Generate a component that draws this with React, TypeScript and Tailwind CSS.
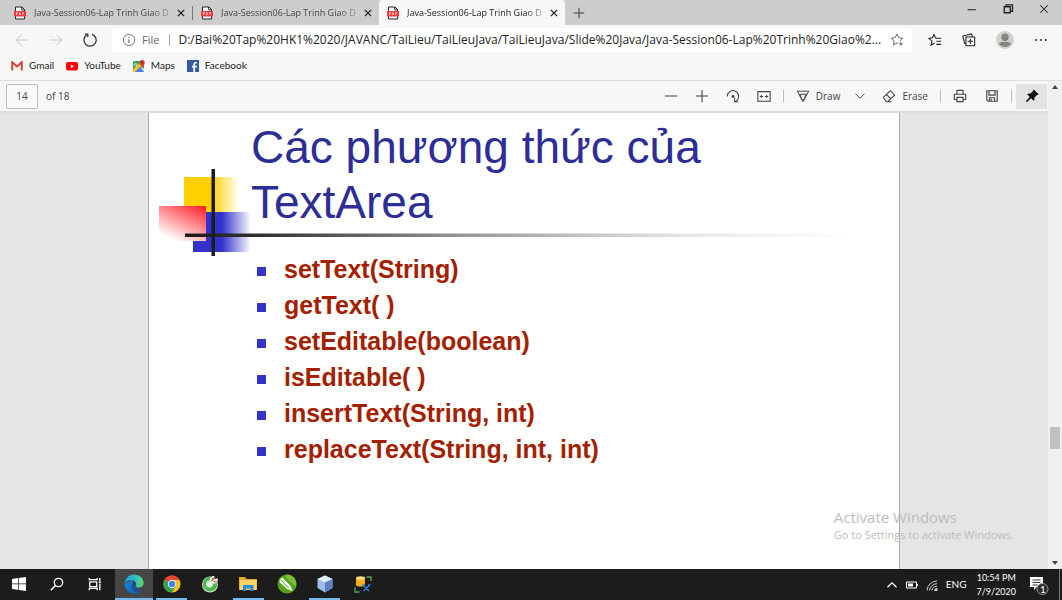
import type { ReactNode } from "react";

function Svg({ children, className = "size-4" }: { children: ReactNode; className?: string }) {
  return (
    <svg viewBox="0 0 16 16" fill="none" stroke="currentColor" strokeWidth="1" className={`shrink-0 ${className}`} aria-hidden="true">
      {children}
    </svg>
  );
}

function PdfIcon() {
  return (
    <svg viewBox="0 0 12 14" className="h-3.5 w-3 shrink-0" aria-hidden="true">
      <path d="M1.500 1h6.500l2.600 2.600V13H1.500Z" fill="#fff" stroke="#222" />
      <path d="M7.800 1v3h3" fill="none" stroke="#222" />
      <rect x="0" y="5" width="12" height="5.500" rx="1" fill="#f5363b" />
      <path d="M2.400 9V6.500h1v1.200h-1M5.300 6.500V9h.6l.6-.6V7l-.6-.5ZM8.600 9V6.500h1.400M8.600 7.800h1.100" fill="none" stroke="#fff" strokeWidth=".6" />
    </svg>
  );
}

function CloseIcon() {
  return (
    <Svg className="size-2.5">
      <path d="M3 3l10 10M13 3L3 13" strokeWidth="2.200" />
    </Svg>
  );
}

function Tab({ active = false }: { active?: boolean }) {
  return (
    <div
      className={`flex h-full min-w-0 max-w-[186px] flex-1 items-center pl-2 pr-1.5 ${
        active ? "rounded-t bg-[#f7f7f7] text-[#222]" : "text-[#444]"
      }`}
    >
      <PdfIcon />
      <a href="#slide" className="ml-2 min-w-0 flex-1 whitespace-nowrap text-[9px] leading-4 [mask-image:linear-gradient(to_right,black_85%,transparent_105%)]">
        Java-Session06-Lap Trinh Giao D
      </a>
      <button aria-label="Close tab" className="ml-1 text-[#222]">
        <CloseIcon />
      </button>
    </div>
  );
}

function TabStrip() {
  return (
    <div className="flex h-[25px] shrink-0 items-center bg-[#cdcdcd] pl-1.5">
      <Tab />
      <div className="h-3.5 w-px bg-[#777]" />
      <Tab />
      <Tab active />
      <button aria-label="New tab" className="ml-2 text-[#444]">
        <Svg className="size-3">
          <path d="M8 1v14M1 8h14" strokeWidth="1.400" />
        </Svg>
      </button>
      <div className="ml-auto flex items-center gap-6 pr-3 pb-2 text-[#222]">
        <button aria-label="Minimize">
          <Svg className="size-3"><path d="M2 9h11" strokeWidth="1.400" /></Svg>
        </button>
        <button aria-label="Restore">
          <Svg className="size-3"><path d="M3 5h8v8H3ZM5.500 5V2.500H14V11h-3" strokeWidth="1.800" /></Svg>
        </button>
        <button aria-label="Close">
          <Svg className="size-3"><path d="M3 3l10 10M13 3L3 13" strokeWidth="1.400" /></Svg>
        </button>
      </div>
    </div>
  );
}

function AddressRow() {
  return (
    <div className="flex h-[30px] shrink-0 items-center pl-3.5 pr-3.5 text-[#333]">
      <div className="flex w-[98px] shrink-0 items-center gap-[18px]">
        <button aria-label="Back" className="text-[#c8c8c8]">
          <Svg><path d="M14.500 8H2M7.500 2.500L2 8l5.500 5.500" /></Svg>
        </button>
        <button aria-label="Forward" className="text-[#c8c8c8]">
          <Svg><path d="M1.500 8H14M8.500 2.500L14 8l-5.500 5.500" /></Svg>
        </button>
        <button aria-label="Refresh">
          <Svg><path d="M10 2.300A6.100 6.100 0 1 1 4.700 3" strokeWidth="1.300" /><path d="M2.800 2.200h3v3" strokeWidth="1.300" /></Svg>
        </button>
      </div>
      <div className="flex h-6 min-w-0 flex-1 items-center rounded bg-white pl-2.5 pr-2">
        <Svg className="size-3.5 text-[#666]">
          <circle cx="8" cy="8" r="6.500" />
          <path d="M8 7v4.500M8 4.200v1.400" strokeWidth="1.300" />
        </Svg>
        <span className="ml-1.5 text-[11px] text-[#666]">File</span>
        <div className="ml-2.5 mr-2 h-3 w-px shrink-0 bg-[#aaa]" />
        <input
          aria-label="Address"
          readOnly
          className="min-w-0 flex-1 bg-transparent text-[12px] text-[#222] outline-none"
          value="D:/Bai%20Tap%20HK1%2020/JAVANC/TaiLieu/TaiLieuJava/TaiLieuJava/Slide%20Java/Java-Session06-Lap%20Trinh%20Giao%2..."
        />
        <button aria-label="Add to favorites" className="ml-2 text-[#555]">
          <Svg className="size-3.5">
            <path d="M9.500 12L8 11.300 4 13.700l.8-4.500L1.500 6l4.500-.7L8 1.300l2 4 4.500.7-2.800 2.700.2.800M12.500 10.500v4M10.500 12.500h4" />
          </Svg>
        </button>
      </div>
      <div className="ml-4 flex shrink-0 items-center gap-5 text-[#222]">
        <button aria-label="Favorites">
          <Svg className="size-3.5">
            <path d="M8.500 6H15M9.500 9.500H15M9.500 13H15M7.500 11.500L3.500 14l1-4.700L1 6.200l4-.7L6.800 1.700 8.500 5.500" strokeWidth="1.200" />
          </Svg>
        </button>
        <button aria-label="Collections">
          <Svg className="size-3.5">
            <path d="M4.500 4.500h10v10h-10ZM9.500 6.500v6M6.500 9.500h6M4 12l-1-.3L1 3.500 11 1l.8 3" strokeWidth="1.200" />
          </Svg>
        </button>
        <button aria-label="Profile">
          <svg viewBox="0 0 18 18" className="size-[18px]" aria-hidden="true">
            <circle cx="9" cy="9" r="9" fill="#d2d0ce" />
            <circle cx="9" cy="6.300" r="3.700" fill="#888683" />
            <path d="M3 13c0-3 12-3 12 0-2.500 4-9.500 4-12 0Z" fill="#888683" />
          </svg>
        </button>
        <button aria-label="Settings and more">
          <Svg className="size-3.5">
            <g fill="currentColor" stroke="none">
              <circle cx="2.500" cy="8" r="1.100" /><circle cx="8" cy="8" r="1.100" /><circle cx="13.500" cy="8" r="1.100" />
            </g>
          </Svg>
        </button>
      </div>
    </div>
  );
}

function Bookmarks() {
  const link = "flex items-center gap-1.5";
  return (
    <nav className="flex h-[25px] shrink-0 items-center gap-3 pb-1 pl-[11px] font-['Lato','Open_Sans',sans-serif] text-[10px] text-[#222]">
      <a href="#gmail" className={link}>
        <svg viewBox="0 0 12 10" className="h-2.5 w-3" aria-hidden="true">
          <path d="M1.500 1h9v8h-9Z" fill="#f3efef" />
          <path d="M1.200 9.500V1.200L6 5.500l4.800-4.300v8.300" fill="none" stroke="#d6402f" strokeWidth="1.900" />
        </svg>
        Gmail
      </a>
      <a href="#youtube" className={link}>
        <svg viewBox="0 0 12 10" className="h-2.5 w-3" aria-hidden="true">
          <rect y="1" width="12" height="8.500" rx="2" fill="#f00" />
          <path d="M4.800 3.400v3.800L8 5.300Z" fill="#fff" />
        </svg>
        YouTube
      </a>
      <a href="#maps" className={link}>
        <svg viewBox="0 0 12 12" className="size-3" aria-hidden="true">
          <rect x="0" y="1" width="11" height="11" rx="1.500" fill="#34a05a" />
          <path d="M4 12l5-5 2 2v3Z" fill="#dfe3e6" />
          <path d="M0 9.500L8.500 1h2.500v3L3 12H0Z" fill="#f4c531" />
          <path d="M2 12l5-5 4 5Z" fill="#4a80e8" />
          <path d="M0 2.500Q0 1 1.500 1h6L0 8.500Z" fill="#34a05a" />
          <path d="M3.500 3.400a1.400 1.400 0 1 0 .5 1.400H2.800" fill="none" stroke="#fff" strokeWidth=".7" />
          <path d="M9 8C8.600 6 6.500 5 6.500 2.700a2.600 2.600 0 0 1 5.200 0C11.700 5 9.500 6 9 8Z" fill="#e5392f" />
          <circle cx="9.100" cy="2.700" r=".9" fill="#7c1812" />
        </svg>
        Maps
      </a>
      <a href="#facebook" className={link}>
        <svg viewBox="0 0 12 12" className="size-3" aria-hidden="true">
          <rect width="12" height="12" fill="#3659a5" />
          <path d="M6.300 12V7.500H4.900V5.700h1.400V4.300c0-1.600 1-2.400 2.400-2.400h1.300v1.700H9c-.7 0-.9.300-.9.900v1.200H10l-.3 1.800H8.100V12Z" fill="#fff" />
        </svg>
        Facebook
      </a>
    </nav>
  );
}

function PdfToolbar() {
  return (
    <div className="flex h-8 shrink-0 items-center border-b-2 border-[#dcdedd] bg-[#f7f7f7] pl-1.5 text-[10px] text-[#444]">
      <input aria-label="Page number" defaultValue="14" className="h-[25px] w-8 rounded-xs border border-[#bbb] bg-[#fafafa] text-center" />
      <span className="ml-2">of 18</span>
      <div className="ml-auto flex h-full items-center">
        <div className="flex items-center gap-[17px]">
          <button aria-label="Zoom out"><Svg className="size-3.5"><path d="M1 8h14" strokeWidth="1.200" /></Svg></button>
          <button aria-label="Zoom in"><Svg className="size-3.5"><path d="M1 8h14M8 1v14" strokeWidth="1.200" /></Svg></button>
          <button aria-label="Rotate">
            <Svg className="size-3.5"><path d="M1.500 8.500a6.500 6.500 0 1 1 11 4.500l-2.500 2M14 14.500H9.800V10.500" strokeWidth="1.200" /><circle cx="8" cy="8.500" r="1.300" fill="currentColor" /></Svg>
          </button>
          <button aria-label="Fit to width">
            <Svg className="size-3.5"><path d="M1 3h14v11H1ZM3.500 8.500h3.500M9 8.500h3.500" strokeWidth="1.200" /><path d="M3 8.500l2.500-2v4ZM13 8.500l-2.500-2v4Z" fill="currentColor" stroke="none" /></Svg>
          </button>
        </div>
        <div className="mx-3 h-3 w-px bg-[#bbb]" />
        <button className="flex items-center gap-1.5">
          <Svg className="size-3.5"><path d="M1.500 2.500l5 9.500 1.500 2.500 1.500-2.500 5-9.500M1 2.500h14M3.500 6h9M6.500 12h3M6.500 12L5 6M9.500 12L11 6" strokeWidth="1.100" /></Svg>
          Draw
        </button>
        <button aria-label="Draw options" className="ml-3.5"><Svg className="size-3"><path d="M2 5l6 6 6-6" strokeWidth="1.300" /></Svg></button>
        <button className="ml-4 flex items-center gap-1.5">
          <Svg className="size-3.5"><path d="M1.500 9.500L9.500 2l5 5-8 7.500H5ZM5 6.300l5.500 5M5 14.500h6" strokeWidth="1.200" /></Svg>
          Erase
        </button>
        <div className="mx-3 h-3 w-px bg-[#bbb]" />
        <button aria-label="Print"><Svg className="size-3.5"><path d="M4.500 6V1.500h7V6M4 12H1.500V6h13v6H12M4.500 9.500h7v5h-7Z" strokeWidth="1.300" /></Svg></button>
        <button aria-label="Save" className="ml-[18px]"><Svg className="size-3.5"><path d="M2 2h12v12H3.500L2 12.500ZM4.500 2v5h7V2M5 14v-4h6v4M7 11v3" strokeWidth="1.300" /></Svg></button>
        <div className="ml-3 mr-1 h-3 w-px bg-[#bbb]" />
        <button aria-label="Unpin toolbar" className="mr-px flex h-[25px] w-[31px] items-center justify-center bg-[#e3e3e3] text-[#111]">
          <Svg className="size-3.5"><path d="M10 1l5 5-1.500.5-3 3-.5 3.500-3-3L2 14.500 1.500 14 6 9 3 6l3.500-.5 3-3Z" fill="currentColor" /></Svg>
        </button>
      </div>
    </div>
  );
}

const methods = [
  "setText(String)",
  "getText( )",
  "setEditable(boolean)",
  "isEditable( )",
  "insertText(String, int)",
  "replaceText(String, int, int)",
];

function SlideOrnament() {
  return (
    <svg viewBox="159 168 700 88" className="absolute left-2.5 top-[55px] h-[88px] w-[700px]" aria-hidden="true">
      <defs>
        <linearGradient id="yellow"><stop offset=".5" stopColor="#ffcf00" /><stop offset="1" stopColor="#ffcf00" stopOpacity="0" /></linearGradient>
        <linearGradient id="blue"><stop offset=".5" stopColor="#3333cc" /><stop offset="1" stopColor="#3333cc" stopOpacity="0" /></linearGradient>
        <linearGradient id="red" x1="1" y1="0" x2=".35" y2="1"><stop offset="0" stopColor="#ff1a24" /><stop offset="1" stopColor="#fff" /></linearGradient>
        <linearGradient id="rule"><stop offset="0" stopColor="#1c1c1c" /><stop offset=".12" stopColor="#333" /><stop offset=".42" stopColor="#999" /><stop offset=".75" stopColor="#e8e8e8" /><stop offset="1" stopColor="#fff" /></linearGradient>
      </defs>
      <rect x="184" y="177" width="55" height="35" fill="url(#yellow)" />
      <rect x="193" y="212" width="58" height="40" fill="url(#blue)" />
      <rect x="159" y="206" width="47" height="35" fill="url(#red)" />
      <rect x="185" y="233.500" width="670" height="3.500" fill="url(#rule)" />
      <rect x="211.500" y="169" width="3.500" height="87" fill="#1c1c1c" />
    </svg>
  );
}

function Slide() {
  return (
    <article id="slide" className="relative h-full w-[752px] border-x border-[#a8a8a8] bg-white pl-[102px] pt-[7px] font-['Liberation_Sans',sans-serif]">
      <SlideOrnament />
      <h1 className="relative max-w-[500px] text-[46px] leading-[55px] text-[#2d2d96]">Các phương thức của TextArea</h1>
      <ul className="mt-[21px] text-[25px] font-bold leading-9 text-[#a32100]">
        {methods.map((method) => (
          <li key={method} className="flex items-center gap-[18px] pl-1.5">
            <span className="mt-1 size-[9px] bg-[#3333cc]" />
            {method}
          </li>
        ))}
      </ul>
    </article>
  );
}

function Scrollbar() {
  return (
    <div className="flex w-3.5 shrink-0 flex-col items-center bg-[#f0f0f0] py-1 text-[#444]" aria-hidden="true">
      <svg viewBox="0 0 6 4" className="h-1 w-1.5"><path d="M0 4l3-4 3 4Z" fill="currentColor" /></svg>
      <div className="grow-[75]" />
      <div className="h-[22px] w-2.5 bg-[#c1c1c1]" />
      <div className="grow-[25]" />
      <svg viewBox="0 0 6 4" className="h-1 w-1.5"><path d="M0 0l3 4 3-4Z" fill="currentColor" /></svg>
    </div>
  );
}

function EdgeLogo() {
  return (
    <svg viewBox="0 0 20 20" className="size-5" aria-hidden="true">
      <defs>
        <linearGradient id="edgeTop"><stop offset="0" stopColor="#229be0" /><stop offset=".6" stopColor="#2cc1c7" /><stop offset="1" stopColor="#68dc58" /></linearGradient>
        <linearGradient id="edgeBody" x2="1" y2="1"><stop offset="0" stopColor="#1688d8" /><stop offset="1" stopColor="#1160b4" /></linearGradient>
      </defs>
      <path d="M.5 10A9.500 9.500 0 0 0 15.500 17.800C9 19 6 13.500 9 10L8 6Z" fill="url(#edgeBody)" />
      <path d="M8.800 9C5.500 13 9.500 18.500 16 17.300l2.500-2.300c-3 1.500-7.500.5-7.500-2Z" fill="#1055ad" />
      <path d="M.5 10C.5 4.500 5 .5 10 .5c5.500 0 9.600 4 9.600 8.200 0 3.300-2.600 4.900-5 4.900-2 0-3.100-.7-3.100-1.400 0-.6.700-.9.700-2.300C12.200 7.800 10 6.300 7.300 6.300 3.500 6.300 1 8.300.5 10Z" fill="url(#edgeTop)" />
    </svg>
  );
}

function ChromeLogo() {
  return (
    <svg viewBox="0 0 20 20" className="size-[18px]" aria-hidden="true">
      <circle cx="10" cy="10" r="9.500" fill="#fbc116" />
      <path d="M10 10L1.800 5.250A9.500 9.500 0 0 0 10 19.500l4-7Z" fill="#31a14e" />
      <path d="M10 10L1.800 5.250A9.500 9.500 0 0 1 18.300 5.500H10Z" fill="#e64235" />
      <circle cx="10" cy="10" r="4.600" fill="#fff" />
      <circle cx="10" cy="10" r="3.600" fill="#4285ee" />
    </svg>
  );
}

const taskItems: { name: string; state?: "active" | "open"; icon: ReactNode }[] = [
  {
    name: "Start",
    icon: <svg viewBox="0 0 14 14" className="size-3.5" fill="#fff" aria-hidden="true"><path d="M0 2l6-.9v5.500H0ZM6.700 1L14 0v6.600H6.700ZM0 7.300h6v5.500L0 12ZM6.700 7.300H14V14l-7.300-1Z" /></svg>,
  },
  { name: "Search", icon: <Svg className="size-3.5"><circle cx="9.700" cy="6.300" r="4.800" strokeWidth="1.500" /><path d="M6.300 9.700L1 15" strokeWidth="1.700" /></Svg> },
  { name: "Task view", icon: <Svg className="size-3.5"><path d="M2 5.500h8v5.500H2ZM1.500 1v2h9V1M1.500 15v-2h9v2M13.500 1v4M13.500 8v7M12.300 6.300h2.500" strokeWidth="1.500" /></Svg> },
  { name: "Microsoft Edge", state: "active", icon: <EdgeLogo /> },
  { name: "Google Chrome", state: "open", icon: <ChromeLogo /> },
  {
    name: "Coc Coc",
    icon: (
      <svg viewBox="0 0 18 18" className="size-[18px]" aria-hidden="true">
        <circle cx="9" cy="9.500" r="8" fill="#c9ebc8" />
        <path d="M9.500 1.800A7.300 7.300 0 1 0 16.300 8L12 9a3.500 3.500 0 1 1-3.500-3.500Z" fill="#52b553" />
        <circle cx="8.800" cy="9.700" r="2.500" fill="#e9f7e7" />
        <path d="M9.500 8l1.800-7h2.500ZM10.500 8.500L16 3l1.300 2.200Z" fill="#fff" />
        <path d="M11 3.500h2M10.500 6l3-3M12.500 6.500l3 .5" stroke="#e84848" strokeWidth="1.100" />
      </svg>
    ),
  },
  {
    name: "File Explorer",
    state: "open",
    icon: (
      <svg viewBox="0 0 18 16" className="h-4 w-[18px]" aria-hidden="true">
        <path d="M0 1h6l1.500 2H18v11H0Z" fill="#e9a92b" />
        <path d="M1 4h16.500v10H1Z" fill="#fcd566" />
        <path d="M4 15V9h10.500v6h-3v-2.500H7V15Z" fill="#2f8ad8" />
      </svg>
    ),
  },
  {
    name: "CorelDRAW",
    icon: (
      <svg viewBox="0 0 20 20" className="size-5" aria-hidden="true">
        <circle cx="10" cy="10" r="9.500" fill="#54a51c" />
        <path d="M10 .5a9.500 9.500 0 0 1 9 12L8 3Z" fill="#79bd35" />
        <path d="M3.500 5L5.500 3.500 13.500 12l2 5L10 15 2.500 8Z" fill="#fff" />
        <path d="M4 6l8 8.500" stroke="#4b9420" strokeWidth="1" />
      </svg>
    ),
  },
  {
    name: "VirtualBox",
    state: "open",
    icon: (
      <svg viewBox="0 0 18 18" className="size-[18px]" aria-hidden="true">
        <path d="M9 .5l7.500 3.500v9L9 17.500 1.500 13V4Z" fill="#9dbce8" />
        <path d="M9 .5l7.500 3.500L9 7.500 1.500 4Z" fill="#e3edfb" />
        <path d="M9 7.500L16.500 4v9L9 17.500Z" fill="#5b7fc0" />
      </svg>
    ),
  },
  {
    name: "Database tools",
    icon: (
      <svg viewBox="0 0 18 18" className="size-[18px]" aria-hidden="true">
        <path d="M2 3v7c0 2 9 2 9 0V3Z" fill="#f6ae1b" />
        <ellipse cx="6.500" cy="3" rx="4.500" ry="1.800" fill="#ffdf7d" />
        <path d="M12.500 2H17v4M1 12.500V17h4.500" fill="none" stroke="#4aa760" strokeWidth="1.400" />
        <path d="M9.500 10.500l5.500 5.500M15 10.500L9.500 16M8 10h3M14 10h2.500" stroke="#2e7fd0" strokeWidth="1.600" />
      </svg>
    ),
  },
];

function Taskbar() {
  return (
    <footer className="flex h-[31px] shrink-0 items-stretch bg-[#1c1c1c] text-white">
      <div className="flex w-[382px] justify-between">
        {taskItems.map(({ name, state, icon }) => (
          <button
            key={name}
            aria-label={name}
            className={`flex w-[38px] items-center justify-center ${state === "active" ? "bg-[#464646]" : ""}`}
          >
            <span
              className={`flex h-full items-center justify-center border-b-2 ${
                state === "active" ? "w-full border-[#76b9ed]" : state === "open" ? "w-[31px] border-[#76b9ed]" : "w-full border-transparent"
              }`}
            >
              {icon}
            </span>
          </button>
        ))}
      </div>
      <div className="ml-auto flex items-center font-['Lato','Open_Sans',sans-serif] text-[10px]">
        <button aria-label="Show hidden icons"><Svg className="size-3"><path d="M2 11l6-6 6 6" strokeWidth="1.600" /></Svg></button>
        <svg viewBox="0 0 12 8" className="ml-2 h-2 w-3" aria-hidden="true"><path d="M.5 1h10v6H.5Z" fill="none" stroke="#fff" /><path d="M2 2.500h5v3H2ZM11 3h1v2h-1Z" fill="#fff" /></svg>
        <svg viewBox="0 0 12 12" className="ml-2 size-3" fill="none" stroke="#ccc" strokeWidth="1" aria-hidden="true">
          <path d="M1 11.500A10 10 0 0 1 11 2M3.500 11.500A7.500 7.500 0 0 1 11 4.700M6 11.500a5 5 0 0 1 5-4.200" />
          <path d="M8.500 11.500a2.500 2.500 0 0 1 2.500-2v2Z" fill="#fff" />
        </svg>
        <span className="ml-2">ENG</span>
        <div className="ml-2.5 text-center text-[9px] leading-[14px]">
          <div>10:54 PM</div>
          <div>7/9/2020</div>
        </div>
        <button aria-label="1 notification" className="relative ml-3.5 mr-2.5">
          <svg viewBox="0 0 19 20" className="h-5 w-[19px]" aria-hidden="true">
            <path d="M0 2h13v10H6.500L4 15v-3H0Z" fill="#fff" />
            <path d="M2.500 5h8M2.500 7.500h8M2.500 10h5" stroke="#1c1c1c" strokeWidth=".9" />
            <circle cx="12.500" cy="14" r="5.500" fill="#2b2b2b" stroke="#999" />
          </svg>
          <span className="absolute bottom-0 left-2.5 text-[10px] leading-3">1</span>
        </button>
        <div className="mr-0.5 h-[31px] w-px bg-[#777]" />
      </div>
    </footer>
  );
}

export default function App() {
  return (
    <div className="flex h-screen flex-col overflow-hidden bg-[#f7f7f7] font-['Open_Sans','Noto_Sans',sans-serif]">
      <TabStrip />
      <AddressRow />
      <Bookmarks />
      <main className="relative flex min-h-0 flex-1 border-t border-[#dcdedd]">
        <div className="flex min-w-0 flex-1 flex-col">
          <PdfToolbar />
          <div className="flex min-h-0 flex-1 justify-center overflow-hidden bg-[#e5e5e5]">
            <Slide />
          </div>
        </div>
        <Scrollbar />
        <div className="pointer-events-none absolute bottom-[26px] right-12 text-[#bcbcbc]">
          <p className="text-[15px] leading-5">Activate Windows</p>
          <p className="text-[11px] leading-4">Go to Settings to activate Windows.</p>
        </div>
      </main>
      <Taskbar />
    </div>
  );
}
